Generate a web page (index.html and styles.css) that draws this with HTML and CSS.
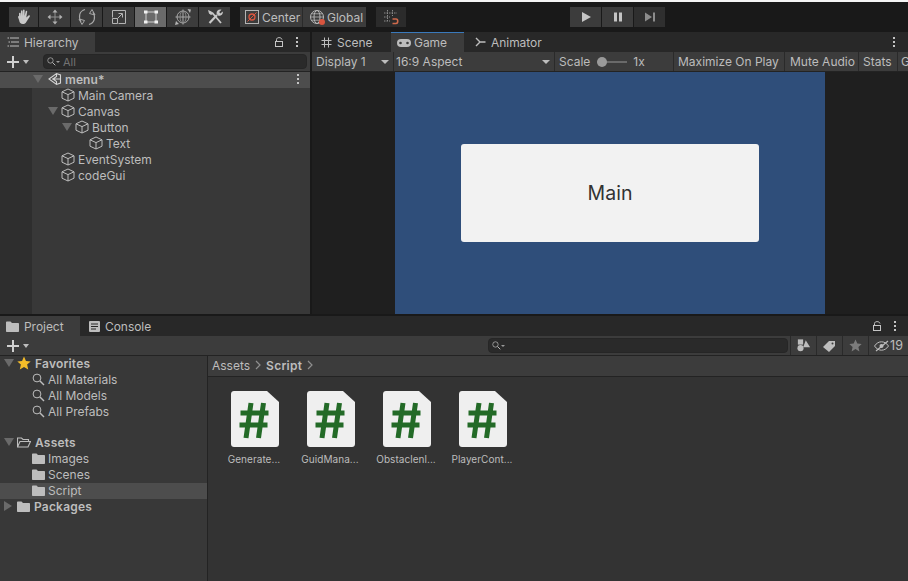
FILE: index.html
```html
<!DOCTYPE html>
<html lang="en">
<head>
<meta charset="utf-8">
<title>Unity Editor</title>
<link rel="stylesheet" href="styles.css">
</head>
<body>
<svg class="defs" width="0" height="0">
  <symbol id="cube" viewBox="0 0 14 14"><path d="M7 1 13 3.800V10.200L7 13 1 10.200V3.800ZM1 3.800 7 6.600 13 3.800M7 6.600V13" fill="none" stroke="#bdbdbd" stroke-width="1"/></symbol>
  <symbol id="folder" viewBox="0 0 13 11"><path d="M0 1.500C0 .8.5.5 1 .5H4.500L6 2H12C12.600 2 13 2.400 13 3V10C13 10.600 12.600 11 12 11H1C.4 11 0 10.600 0 10Z" fill="#bdbdbd"/></symbol>
  <symbol id="search" viewBox="0 0 13 13"><circle cx="5" cy="5" r="3.900" fill="none" stroke="#bdbdbd"/><path d="M8 8 12 12" stroke="#bdbdbd" stroke-width="1.400"/></symbol>
  <symbol id="hash" viewBox="0 0 48 56"><path d="M0 3C0 1.300 1.300 0 3 0H36L48 11V53C48 54.700 46.700 56 45 56H3C1.300 56 0 54.700 0 53Z" fill="#efefef"/><path d="M20 12 15 47M32.500 12 27.500 47M9.500 22H37.500M8.500 34H36.500" fill="none" stroke="#236a27" stroke-width="5"/></symbol>
</svg>

<div class="app">
  <div class="topline"></div>
  <header class="toolbar">
    <div class="tool-group">
      <button class="tool"><svg width="18" height="18" viewBox="0 0 18 18"><path d="M4 9V5.500C4 4.500 5.500 4.500 5.500 5.500V8.500L6 3C6.100 2 7.600 2 7.600 3L8 8V2.200C8 1.200 9.600 1.200 9.600 2.200V8L10.700 3.300C11 2.300 12.300 2.600 12.200 3.600L11.300 9.500 13.500 7.500C14.300 6.800 15.400 7.700 14.700 8.700L11.300 14C10.500 15.500 9.500 16 8 16 5.500 16 4.500 14.500 4.200 12.500L3 9C2.700 7.800 3.900 7.500 4 9Z" fill="#c8c8c8"/></svg></button>
      <button class="tool"><svg width="18" height="18" viewBox="0 0 18 18"><path d="M9 4V14M4 9H14" stroke="#8f8f8f" stroke-width="1"/><path d="M9 1.500 11.500 4.500H6.500ZM9 16.500 11.500 13.500H6.500ZM1.500 9 4.500 6.500V11.500ZM16.500 9 13.500 6.500V11.500Z" fill="#b0b0b0"/></svg></button>
      <button class="tool"><svg width="20" height="18" viewBox="0 0 20 18"><path d="M8 1.500C2.500 3 1 8.500 4 14M12 16.500C17.500 15 19 9.500 16 4" fill="none" stroke="#a8a8a8" stroke-width="1.100"/><path d="M2 11 5 16.500 7.500 12.500ZM18 7 15 1.500 12.500 5.500Z" fill="none" stroke="#a8a8a8"/></svg></button>
      <button class="tool"><svg width="16" height="16" viewBox="0 0 16 16"><path d="M1.500 8.500V1.500H14.500V14.500H7.500M1.500 9.500H6.500V14.500H1.500ZM6.500 9.500 11 5M7.500 4.500H11.500V8.500" fill="none" stroke="#b4b4b4" stroke-width="1"/></svg></button>
      <button class="tool tool-on"><svg width="16" height="16" viewBox="0 0 16 16"><path d="M3 3H13V13H3Z" fill="none" stroke="#e8e8e8" stroke-width=".8"/><path d="M1 1.500H4.500V4.500H1ZM11.500 1.500H15V4.500H11.500ZM1 11.500H4.500V14.500H1ZM11.500 11.500H15V14.500H11.500Z" fill="#f0f0f0"/></svg></button>
      <button class="tool"><svg width="18" height="18" viewBox="0 0 18 18"><circle cx="9" cy="9" r="6" fill="none" stroke="#a8a8a8"/><path d="M9 1.500V16.500M1.500 9H16.500" stroke="#a8a8a8"/><ellipse cx="9" cy="9" rx="3" ry="6" fill="none" stroke="#8a8a8a"/><path d="M13.500 1 17 1.500 16 5ZM1 17 2 13 5 16Z" fill="#b4b4b4"/></svg></button>
      <button class="tool"><svg width="18" height="18" viewBox="0 0 18 18"><path d="M3.500 15 11 7" stroke="#c8c8c8" stroke-width="2.200"/><path d="M6 4.500 15 15" stroke="#c8c8c8" stroke-width="1.800"/><path d="M2 2 5.500 3.500 7 6 5 7 3 5.500ZM10.500 5.500C10.500 2.500 13 1 15.500 1.800L13.200 4 14.300 5.500 16.800 3.500C17.300 6 15 8.500 12 7.500Z" fill="#c8c8c8"/></svg></button>
    </div>
    <div class="pivot-group">
      <button class="pivot pivot-center"><svg width="16" height="16" viewBox="0 0 16 16"><rect x="1.500" y="1.500" width="13" height="13" fill="none" stroke="#b4b4b4"/><circle cx="8" cy="8" r="3" fill="none" stroke="#d9553f" stroke-width="1.300"/><path d="M3.500 12.500 12.500 3.500" stroke="#d9553f"/></svg><span>Center</span></button>
      <button class="pivot pivot-global"><svg width="17" height="17" viewBox="0 0 17 17"><circle cx="8" cy="8" r="6.500" fill="none" stroke="#b8b8b8"/><ellipse cx="8" cy="8" rx="3" ry="6.500" fill="none" stroke="#b8b8b8"/><path d="M1.500 8H14.500M2.500 4.800H13.500M2.500 11.200H13.500" stroke="#b8b8b8" stroke-width=".8"/><circle cx="13" cy="13" r="3" fill="#d9553f"/></svg><span>Global</span></button>
    </div>
    <button class="snap"><svg width="16" height="16" viewBox="0 0 16 16"><path d="M4.500 1V12M9.500 1V7M1 4H14M1 8H7M1 12H7" stroke="#8a8a8a" stroke-dasharray="1.500 1"/><path d="M9.500 10H13C15.300 10 15.300 14.500 13 14.500H9.500" fill="none" stroke="#cf6a4b" stroke-width="1.600"/></svg></button>
    <div class="play-group">
      <button class="play"><svg width="12" height="12" viewBox="0 0 12 12"><path d="M2 1 11 6 2 11Z" fill="#c4c4c4"/></svg></button>
      <button class="play"><svg width="12" height="12" viewBox="0 0 12 12"><path d="M2 1.500H5V10.500H2ZM7 1.500H10V10.500H7Z" fill="#c4c4c4"/></svg></button>
      <button class="play play-step"><svg width="12" height="12" viewBox="0 0 12 12"><path d="M1 1.500 8 6 1 10.500ZM9 1.500H11V10.500H9Z" fill="#8c8c8c"/></svg></button>
    </div>
  </header>

  <main class="top-panels">
    <section class="hierarchy">
      <div class="tabbar">
        <div class="tab tab-active tab-hier"><svg class="tab-icon" width="12" height="10" viewBox="0 0 12 10"><path d="M3 1H12M4 5H12M3 9H12M.5 1H2M1.500 5H3M.5 9H2" stroke="#bdbdbd"/></svg><span>Hierarchy</span></div>
        <div class="tab-actions">
          <svg width="9" height="12" viewBox="0 0 9 12"><rect x=".5" y="5.500" width="7" height="5" fill="none" stroke="#c4c4c4"/><path d="M1.500 5.500V3.500C1.500 1 6.500 1 7 3.500" fill="none" stroke="#c4c4c4"/></svg>
          <span class="kebab"><i></i><i></i><i></i></span>
        </div>
      </div>
      <div class="panel-toolbar">
        <span class="add"><b class="plus"></b><i class="caret caret-small"></i></span>
        <div class="searchbox searchbox-hier"><svg width="9" height="9"><use href="#search"/></svg><i class="caret caret-mini"></i><span>All</span></div>
      </div>
      <div class="tree">
        <div class="row row-scene">
          <i class="arrow-down"></i>
          <svg class="scene-icon" width="14" height="14" viewBox="0 0 14 14"><path d="M1 7 8.500 1.500 12.500 3V11L8.500 12.500ZM4 7H12.500M8.500 1.500V4.500L5 7 8.500 9.500V12.500" fill="none" stroke="#d4d4d4" stroke-width="1.100"/></svg>
          <span class="scene-name">menu*</span>
          <span class="kebab kebab-row"><i></i><i></i><i></i></span>
        </div>
        <div class="row lvl-2"><svg class="cube"><use href="#cube"/></svg><span>Main Camera</span></div>
        <div class="row lvl-1"><i class="arrow-down"></i><svg class="cube"><use href="#cube"/></svg><span>Canvas</span></div>
        <div class="row lvl-3"><i class="arrow-down"></i><svg class="cube"><use href="#cube"/></svg><span>Button</span></div>
        <div class="row lvl-4"><svg class="cube"><use href="#cube"/></svg><span>Text</span></div>
        <div class="row lvl-2"><svg class="cube"><use href="#cube"/></svg><span>EventSystem</span></div>
        <div class="row lvl-2"><svg class="cube"><use href="#cube"/></svg><span>codeGui</span></div>
      </div>
    </section>

    <section class="game">
      <div class="tabbar">
        <div class="tab tab-scene"><svg class="tab-icon" width="11" height="11" viewBox="0 0 11 11"><path d="M3.500 .5V10.500M7.500 .5V10.500M.5 3.500H10.500M.5 7.500H10.500" stroke="#bdbdbd"/></svg><span>Scene</span></div>
        <div class="tab tab-active tab-game"><svg class="tab-icon" width="14" height="8" viewBox="0 0 14 8"><rect width="14" height="8" rx="4" fill="#bdbdbd"/><circle cx="3.500" cy="4" r="1.300" fill="#3c3c3c"/><circle cx="10.500" cy="4" r="1.300" fill="#3c3c3c"/></svg><span>Game</span></div>
        <div class="tab tab-anim"><svg class="tab-icon" width="11" height="10" viewBox="0 0 11 10"><path d="M1 1 5 5 1 9M5 5H10.500" fill="none" stroke="#bdbdbd" stroke-width="1.400"/></svg><span>Animator</span></div>
        <div class="tab-actions tab-actions-game"><span class="kebab"><i></i><i></i><i></i></span></div>
      </div>
      <div class="game-toolbar">
        <div class="gt-item gt-display"><span>Display 1</span><i class="caret"></i></div>
        <div class="gt-item gt-aspect"><span>16:9 Aspect</span><i class="caret"></i></div>
        <div class="gt-item gt-scale"><span>Scale</span><span class="slider"><i></i></span><span>1x</span></div>
        <div class="gt-item gt-max">Maximize On Play</div>
        <div class="gt-item gt-mute">Mute Audio</div>
        <div class="gt-item gt-stats">Stats</div>
        <div class="gt-item gt-gizmos">G</div>
      </div>
      <div class="game-view">
        <div class="game-canvas">
          <div class="game-button">Main</div>
        </div>
      </div>
    </section>
  </main>

  <section class="project">
    <div class="tabbar">
      <div class="tab tab-active tab-project"><svg class="tab-icon" width="13" height="11"><use href="#folder"/></svg><span>Project</span></div>
      <div class="tab tab-console"><svg class="tab-icon" width="11" height="11" viewBox="0 0 11 11"><rect width="11" height="11" rx="1" fill="#bdbdbd"/><path d="M2 3H9M2 5.500H9M2 8H7" stroke="#282828"/></svg><span>Console</span></div>
      <div class="tab-actions">
        <svg width="9" height="12" viewBox="0 0 9 12"><rect x=".5" y="5.500" width="7" height="5" fill="none" stroke="#c4c4c4"/><path d="M1.500 5.500V3.500C1.500 1 6.500 1 7 3.500" fill="none" stroke="#c4c4c4"/></svg>
        <span class="kebab"><i></i><i></i><i></i></span>
      </div>
    </div>
    <div class="panel-toolbar project-toolbar">
      <span class="add"><b class="plus"></b><i class="caret caret-small"></i></span>
      <div class="searchbox searchbox-proj"><svg width="9" height="9"><use href="#search"/></svg><i class="caret caret-mini"></i></div>
      <div class="filter"><svg width="14" height="13" viewBox="0 0 16 14"><rect x="1" y="0" width="6" height="6" fill="#bdbdbd"/><circle cx="4" cy="10" r="3.500" fill="#bdbdbd"/><path d="M10 1 15 9H7Z" fill="#bdbdbd"/></svg></div>
      <div class="filter"><svg width="13" height="12" viewBox="0 0 13 12"><path d="M0 7 6 1H12V6L6 12Z" fill="#bdbdbd"/><circle cx="9.500" cy="3.500" r="1" fill="#3c3c3c"/></svg></div>
      <div class="filter"><svg width="13" height="13" viewBox="0 0 13 13"><path d="M6.500 .5 8.300 4.600 12.700 5 9.400 8 10.400 12.500 6.500 10.100 2.600 12.500 3.600 8 .3 5 4.700 4.600Z" fill="#7c7c7c"/></svg></div>
      <div class="filter filter-count"><svg width="15" height="12" viewBox="0 0 15 12"><path d="M.5 6C2.500 3 5 1.800 7.500 1.800S12.500 3 14.500 6C12.500 9 10 10.200 7.500 10.200S2.500 9 .5 6Z" fill="none" stroke="#bdbdbd"/><circle cx="7.500" cy="6" r="2" fill="#bdbdbd"/><path d="M2 11 14 1" stroke="#bdbdbd" stroke-width="1.200"/></svg><span>19</span></div>
    </div>
    <div class="project-body">
      <aside class="sidebar">
        <div class="row side-head"><i class="arrow-down"></i><svg class="side-icon" width="14" height="14" viewBox="0 0 13 13"><path d="M6.500 .5 8.300 4.600 12.700 5 9.400 8 10.400 12.500 6.500 10.100 2.600 12.500 3.600 8 .3 5 4.700 4.600Z" fill="#f5bd29"/></svg><strong>Favorites</strong></div>
        <div class="row side-item"><svg class="item-icon" width="13" height="13"><use href="#search"/></svg><span>All Materials</span></div>
        <div class="row side-item"><svg class="item-icon" width="13" height="13"><use href="#search"/></svg><span>All Models</span></div>
        <div class="row side-item"><svg class="item-icon" width="13" height="13"><use href="#search"/></svg><span>All Prefabs</span></div>
        <div class="row side-head side-gap"><i class="arrow-down"></i><svg class="side-icon" width="14" height="11" viewBox="0 0 14 11"><path d="M.5 10V1H4.500L6 2.500H11.500V4.500M.5 10 3 4.500H13.500L11 10Z" fill="none" stroke="#bdbdbd" stroke-width="1.100"/></svg><strong>Assets</strong></div>
        <div class="row side-item"><svg class="item-icon" width="13" height="11"><use href="#folder"/></svg><span>Images</span></div>
        <div class="row side-item"><svg class="item-icon" width="13" height="11"><use href="#folder"/></svg><span>Scenes</span></div>
        <div class="row side-item side-selected"><svg class="item-icon" width="13" height="11"><use href="#folder"/></svg><span>Script</span></div>
        <div class="row side-head"><i class="arrow-right"></i><svg class="side-icon" width="13" height="11"><use href="#folder"/></svg><strong>Packages</strong></div>
      </aside>
      <div class="browser">
        <div class="breadcrumb"><span>Assets</span><svg width="6" height="10" viewBox="0 0 6 10"><path d="M1 1 5 5 1 9" fill="none" stroke="#8f8f8f" stroke-width="1.200"/></svg><strong>Script</strong><svg width="6" height="10" viewBox="0 0 6 10"><path d="M1 1 5 5 1 9" fill="none" stroke="#8f8f8f" stroke-width="1.200"/></svg></div>
        <div class="files">
          <figure class="file"><svg width="48" height="56"><use href="#hash"/></svg><figcaption>Generate...</figcaption></figure>
          <figure class="file"><svg width="48" height="56"><use href="#hash"/></svg><figcaption>GuidMana...</figcaption></figure>
          <figure class="file"><svg width="48" height="56"><use href="#hash"/></svg><figcaption>Obstaclenl...</figcaption></figure>
          <figure class="file"><svg width="48" height="56"><use href="#hash"/></svg><figcaption>PlayerCont...</figcaption></figure>
        </div>
      </div>
    </div>
  </section>
</div>
</body>
</html>
```
FILE: styles.css
```css
* { box-sizing: border-box; }
html, body { margin: 0; padding: 0; }
body { width: 908px; height: 581px; overflow: hidden; background: #191919; font-family: Inter, "Liberation Sans", sans-serif; font-size: 12px; color: #bdbdbd; }
button { font: inherit; color: inherit; border: 0; padding: 0; }
.defs { position: absolute; }
.app { display: flex; flex-direction: column; height: 581px; }
.topline { height: 2px; background: #f4f4f4; }

.toolbar { height: 30px; display: flex; align-items: center; padding-left: 9px; background: #191919; flex: none; }
.tool-group { display: flex; gap: 1px; }
.tool { width: 31px; height: 20px; background: #3c3c3c; display: flex; align-items: center; justify-content: center; }
.tool:first-child { width: 29px; }
.tool-on { background: #6a6a6a; }
.pivot-group { display: flex; margin-left: 10px; }
.pivot { height: 20px; background: #3c3c3c; display: flex; align-items: center; }
.pivot-center { width: 62px; padding-left: 4px; gap: 2px; }
.pivot-global { width: 64px; padding-left: 6px; gap: 1px; border-left: 1px solid #2a2a2a; }
.snap { width: 30px; height: 20px; margin-left: 10px; background: #2b2b2b; display: flex; align-items: center; justify-content: center; }
.play-group { display: flex; gap: 1px; margin-left: 164px; }
.play { width: 31px; height: 20px; background: #3c3c3c; display: flex; align-items: center; justify-content: center; }
.play-step { background: #2f2f2f; }

.top-panels { height: 282px; display: flex; gap: 2px; flex: none; }
.hierarchy { width: 310px; display: flex; flex-direction: column; background: #383838; }
.game { flex: 1; min-width: 0; display: flex; flex-direction: column; background: #282828; }

.tabbar { height: 20px; display: flex; background: #282828; flex: none; }
.tab { display: flex; align-items: center; height: 20px; letter-spacing: -.05px; }
.tab-active { background: #3c3c3c; }
.tab-icon { flex: none; margin-right: 5px; }
.tab-hier { width: 95px; padding-left: 7px; }
.tab-actions { margin-left: auto; display: flex; align-items: center; gap: 12px; padding-right: 12px; height: 20px; }
.tab-actions-game { padding-right: 13px; }
.kebab { display: inline-flex; flex-direction: column; gap: 2px; width: 2px; }
.kebab i { display: block; width: 2px; height: 2px; background: #c4c4c4; }

.panel-toolbar { height: 20px; display: flex; align-items: center; background: #3c3c3c; border-bottom: 1px solid #232323; flex: none; }
.add { display: flex; align-items: center; gap: 4px; width: 43px; padding-left: 7px; flex: none; }
.plus { display: block; width: 12px; height: 12px; background: linear-gradient(#d0d0d0, #d0d0d0) center / 12px 2px no-repeat, linear-gradient(#d0d0d0, #d0d0d0) center / 2px 12px no-repeat; }
.caret { display: block; width: 0; height: 0; border-left: 4px solid transparent; border-right: 4px solid transparent; border-top: 4px solid #bdbdbd; }
.caret-small { border-left-width: 3px; border-right-width: 3px; }
.caret-mini { border-left-width: 2px; border-right-width: 2px; border-top-width: 2px; border-top-color: #9a9a9a; margin-left: -3px; }
.searchbox { height: 15px; background: #2a2a2a; border-radius: 4px; display: flex; align-items: center; padding-left: 3px; gap: 3px; color: #737373; font-size: 11px; border: 1px solid #262626; }
.searchbox-hier { width: 264px; }
.searchbox-proj { width: 300px; margin-left: 445px; flex: none; }

.tree { flex: 1; background: linear-gradient(90deg, #2e2e2e 32px, #383838 32px); }
.row { height: 16px; padding-bottom: 2px; display: flex; align-items: center; position: relative; white-space: nowrap; }
.row-scene { background: #4d4d4d; padding-left: 33px; }
.scene-icon { margin: 0 3px 0 2px; flex: none; }
.scene-name { font-weight: 600; letter-spacing: .1px; }
.kebab-row { margin-left: auto; margin-right: 11px; }
.arrow-down { display: block; width: 0; height: 0; border-left: 5px solid transparent; border-right: 5px solid transparent; border-top: 8px solid #6a6a6a; margin-right: 3px; flex: none; }
.arrow-right { display: block; width: 0; height: 0; border-top: 5px solid transparent; border-bottom: 5px solid transparent; border-left: 8px solid #6a6a6a; margin-right: 5px; flex: none; }
.cube { width: 14px; height: 14px; margin-right: 3px; flex: none; }
.lvl-2 { padding-left: 61px; }
.lvl-1 { padding-left: 48px; }
.lvl-3 { padding-left: 62px; }
.lvl-4 { padding-left: 89px; }

.tab-scene { width: 79px; padding-left: 9px; }
.tab-game { width: 73px; padding-left: 6px; border-top: 1px solid #3a79bb; }
.tab-game span { margin-left: -2px; }
.tab-anim { padding-left: 11px; }
.tab-scene, .tab-anim { background: transparent; }

.game-toolbar { height: 20px; display: flex; background: #3c3c3c; border-bottom: 1px solid #232323; flex: none; overflow: hidden; }
.gt-item { height: 19px; display: flex; align-items: center; border-right: 1px solid #2a2a2a; white-space: nowrap; flex: none; }
.gt-display { width: 82px; padding-left: 4px; justify-content: space-between; padding-right: 4px; }
.gt-aspect { width: 161px; padding-left: 2px; justify-content: space-between; padding-right: 4px; }
.gt-scale { width: 119px; padding-left: 4px; }
.slider { width: 30px; height: 2px; background: #6a6a6a; margin: 0 6px 0 7px; position: relative; display: block; }
.slider i { position: absolute; left: 0; top: -4px; width: 10px; height: 10px; border-radius: 50%; background: #9a9a9a; }
.gt-max { width: 111px; padding-left: 4px; }
.gt-mute { width: 74px; padding-left: 5px; }
.gt-stats { width: 39px; padding-left: 4px; }
.gt-gizmos { padding-left: 3px; border-right: 0; }

.game-view { flex: 1; background: #1f1f1f; padding-left: 83px; }
.game-canvas { width: 430px; height: 100%; background: #2f4e7a; display: flex; align-items: center; justify-content: center; }
.game-button { width: 298px; height: 98px; background: #f2f2f2; border-radius: 3px; color: #323232; font-size: 19.500px; display: flex; align-items: center; justify-content: center; }

.project { flex: 1; margin-top: 2px; display: flex; flex-direction: column; min-height: 0; background: #383838; }
.tab-project { width: 80px; padding-left: 6px; }
.tab-console { padding-left: 9px; background: transparent; }
.project-toolbar { position: relative; }
.filter { width: 26px; height: 19px; display: flex; align-items: center; justify-content: center; border-left: 1px solid #2a2a2a; flex: none; }
.filter-count { width: 38px; gap: 1px; padding-left: 2px; font-size: 12.500px; }
.searchbox-proj + .filter { margin-left: 2px; }
.project-body { flex: 1; display: flex; min-height: 0; }
.sidebar { width: 208px; background: #383838; border-right: 1px solid #232323; flex: none; }
.side-head { padding-left: 4px; }
.side-gap { margin-top: 15px; }
.side-head strong { font-weight: 600; letter-spacing: .2px; }
.side-icon { margin-right: 4px; flex: none; }
.side-item { padding-left: 32px; }
.item-icon { margin-right: 3px; flex: none; }
.side-selected { background: #4d4d4d; }
.browser { flex: 1; display: flex; flex-direction: column; background: #333333; }
.breadcrumb { height: 21px; padding: 0 0 2px 4px; background: #3c3c3c; border-bottom: 1px solid #232323; display: flex; align-items: center; gap: 5px; flex: none; }
.breadcrumb strong { font-weight: 600; letter-spacing: .25px; }
.files { display: flex; padding: 14px 0 0 9px; }
.file { width: 76px; margin: 0; display: flex; flex-direction: column; align-items: center; }
.file figcaption { font-size: 10px; margin-top: 6px; margin-right: 2px; white-space: nowrap; letter-spacing: .05px; }
```
